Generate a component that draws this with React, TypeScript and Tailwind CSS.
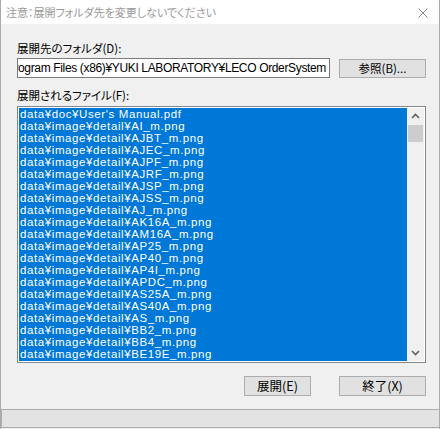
import React from 'react';

const files = [
  "data¥doc¥User's Manual.pdf",
  'data¥image¥detail¥AI_m.png',
  'data¥image¥detail¥AJBT_m.png',
  'data¥image¥detail¥AJEC_m.png',
  'data¥image¥detail¥AJPF_m.png',
  'data¥image¥detail¥AJRF_m.png',
  'data¥image¥detail¥AJSP_m.png',
  'data¥image¥detail¥AJSS_m.png',
  'data¥image¥detail¥AJ_m.png',
  'data¥image¥detail¥AK16A_m.png',
  'data¥image¥detail¥AM16A_m.png',
  'data¥image¥detail¥AP25_m.png',
  'data¥image¥detail¥AP40_m.png',
  'data¥image¥detail¥AP4I_m.png',
  'data¥image¥detail¥APDC_m.png',
  'data¥image¥detail¥AS25A_m.png',
  'data¥image¥detail¥AS40A_m.png',
  'data¥image¥detail¥AS_m.png',
  'data¥image¥detail¥BB2_m.png',
  'data¥image¥detail¥BB4_m.png',
  'data¥image¥detail¥BE19E_m.png',
];

// Noto CJK with proportional kana, closer to Meiryo UI
const jp = "font-['Noto_Sans_CJK_JP',sans-serif] [font-feature-settings:'palt']";
const latin = "font-['Liberation_Sans','Noto_Sans_CJK_JP',sans-serif]";

const Button: React.FC<{ label: string; className?: string }> = ({ label, className = '' }) => (
  <div
    className={`flex items-center justify-center border border-[#adadad] bg-[#e1e1e1] leading-none text-black ${jp} ${className}`}
  >
    {label}
  </div>
);

export default function App() {
  return (
    <div className="flex h-[429px] w-[440px] flex-col overflow-hidden border-x border-[#aaaaaa] bg-[#f0f0f0]">
      {/* Title bar */}
      <div className="flex h-[24px] shrink-0 items-center justify-between bg-white pl-[5px] pr-[11px]">
        <span className={`text-[11px] leading-none text-[#9a9a9a] ${jp}`}>
          注意：展開フォルダ先を変更しないでください
        </span>
        <svg width="10" height="10" viewBox="0 0 10 10" className="mt-[1px]">
          <path d="M0.5 0.5 L9.5 9.5 M9.5 0.5 L0.5 9.5" stroke="#8a8a8a" strokeWidth="1" fill="none" />
        </svg>
      </div>

      {/* Body */}
      <div className="flex flex-1 flex-col pl-[16px] pr-[13px]">
        <div className={`mt-[18px] h-[12px] text-[11.5px] leading-[12px] text-black ${jp}`}>
          展開先のフォルダ(D):
        </div>
        <div className="mt-[4px] flex items-start">
          <div className="flex h-[20px] w-[313px] items-center justify-end overflow-hidden border border-[#7a7a7a] bg-white pr-[3px]">
            <span className={`whitespace-nowrap text-[12px] leading-none tracking-[-0.35px] text-black ${latin}`}>
              C:¥Program Files (x86)¥YUKI LABORATORY¥LECO OrderSystem
            </span>
          </div>
          <Button label="参照(B)..." className="ml-[9px] mt-[1px] h-[19px] w-[87px] text-[11.5px]" />
        </div>

        <div className={`mt-[11px] h-[12px] text-[11.5px] leading-[12px] text-black ${jp}`}>
          展開されるファイル(F):
        </div>

        {/* File list */}
        <div className="mt-[5px] flex h-[257px] w-[409px] border border-[#828790] bg-white p-[1px]">
          <div className="flex-1 overflow-hidden bg-[#0078d7] pl-[1px]">
            {files.map((f) => (
              <div
                key={f}
                className={`h-[12px] whitespace-nowrap text-[11.5px] leading-[12px] tracking-[0.6px] text-white ${latin}`}
              >
                {f}
              </div>
            ))}
          </div>
          <div className="flex w-[17px] flex-col items-center bg-[#f0f0f0]">
            <svg width="9" height="6" viewBox="0 0 9 6" className="mt-[5px]">
              <path d="M1 5 L4.5 1.5 L8 5" stroke="#606060" strokeWidth="1.6" fill="none" />
            </svg>
            <div className="mt-[6px] h-[17px] w-[15px] bg-[#cdcdcd]" />
            <div className="flex-1" />
            <svg width="9" height="6" viewBox="0 0 9 6" className="mb-[5px]">
              <path d="M1 1 L4.5 4.5 L8 1" stroke="#606060" strokeWidth="1.6" fill="none" />
            </svg>
          </div>
        </div>

        <div className="mt-[13px] flex justify-end">
          <Button label="展開(E)" className="h-[20px] w-[67px] text-[12.5px]" />
          <Button label="終了(X)" className="ml-[28px] h-[20px] w-[87px] text-[12.5px]" />
        </div>
      </div>

      {/* Status bar */}
      <div className="mb-[1px] h-[19px] shrink-0 border-y border-l border-[#acacac] bg-[#e3e3e3]" />
    </div>
  );
}
